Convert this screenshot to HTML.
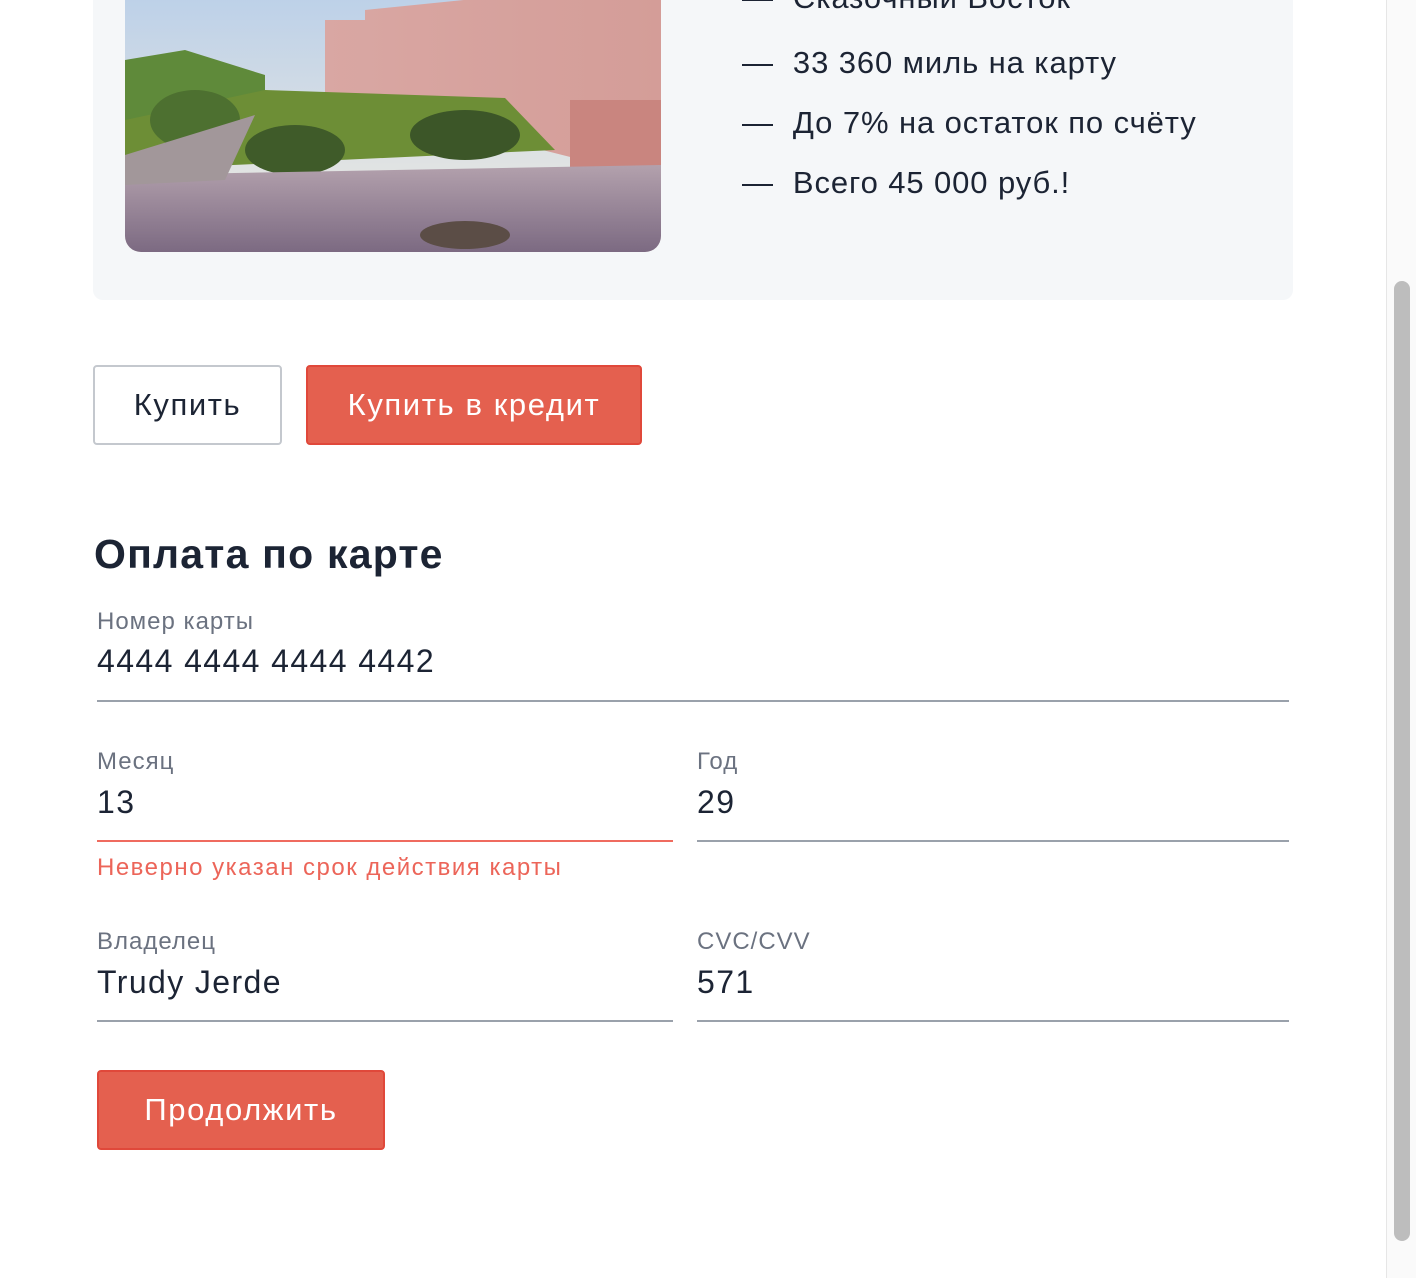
<!DOCTYPE html>
<html><head><meta charset="utf-8"><style>
*{margin:0;padding:0;box-sizing:border-box}
body{width:1416px;height:1278px;overflow:hidden;background:#fff;font-family:"Liberation Sans","Noto Sans CJK SC",sans-serif;color:#1c2434;position:relative}
.abs{position:absolute}
.card{left:93px;top:-40px;width:1200px;height:340px;background:#f5f7f9;border-radius:10px}
.img{left:125px;top:-20px;width:536px;height:272px;border-radius:0 0 16px 16px;overflow:hidden}
.li{left:742px;font-size:31px;white-space:nowrap;letter-spacing:0.9px}
.btn{height:80px;border-radius:4px;font-size:31px;letter-spacing:1.6px;display:flex;align-items:center;justify-content:center}
.lbl{font-size:24px;color:#6b7280;letter-spacing:1px}
.val{font-size:32px;color:#1c2434;letter-spacing:1.4px}
.line{height:2px;background:#9aa1ab}
.sb{left:1386px;top:0;width:30px;height:1278px;background:#fafafa;border-left:1px solid #e6e6e6}
.thumb{left:1394px;top:281px;width:16px;height:960px;background:#bdbdbd;border-radius:8px}
</style></head><body>
<div class="abs card"></div>
<div class="abs img">
<svg width="536" height="272" viewBox="0 0 536 272">
<defs><linearGradient id="sky" x1="0" y1="0" x2="0" y2="1"><stop offset="0" stop-color="#b9cfe9"/><stop offset="1" stop-color="#f2ece0"/></linearGradient>
<linearGradient id="wall" x1="0" y1="0" x2="1" y2="0"><stop offset="0" stop-color="#d9a7a3"/><stop offset="1" stop-color="#d49d98"/></linearGradient>
<linearGradient id="pave" x1="0" y1="0" x2="0" y2="1"><stop offset="0" stop-color="#b3a1ad"/><stop offset="1" stop-color="#7c6a82"/></linearGradient></defs>
<rect width="536" height="272" fill="url(#sky)"/>
<polygon points="200,40 240,40 240,30 536,0 536,200 200,115" fill="url(#wall)"/>
<rect x="445" y="120" width="91" height="80" fill="#c9857f"/>
<polygon points="0,80 60,70 140,95 140,150 0,160" fill="#5f8a3a"/>
<polygon points="0,140 140,110 380,118 430,170 0,190" fill="#6d8e36"/>
<ellipse cx="70" cy="140" rx="45" ry="30" fill="#4d7030"/>
<ellipse cx="170" cy="170" rx="50" ry="25" fill="#3f5b29"/>
<ellipse cx="340" cy="155" rx="55" ry="25" fill="#3c5628"/>
<rect x="120" y="196" width="260" height="12" fill="#c57f72"/>
<polygon points="0,195 536,185 536,272 0,272" fill="url(#pave)"/>
<polygon points="0,175 130,135 100,200 0,205" fill="#a2979a"/>
<ellipse cx="340" cy="255" rx="45" ry="14" fill="#5b4d46"/>
</svg></div>
<div class="abs li" style="top:-20px">—&nbsp;&nbsp;Сказочный Восток</div>
<div class="abs li" style="top:45px">—&nbsp;&nbsp;33 360 миль на карту</div>
<div class="abs li" style="top:105px">—&nbsp;&nbsp;До 7% на остаток по счёту</div>
<div class="abs li" style="top:165px">—&nbsp;&nbsp;Всего 45 000 руб.!</div>

<div class="abs btn" style="left:93px;top:365px;width:189px;border:2px solid #c4c8ce;color:#1c2434">Купить</div>
<div class="abs btn" style="left:306px;top:365px;width:336px;background:#e4604f;border:2px solid #e0483a;color:#fff">Купить в кредит</div>

<div class="abs" style="left:94px;top:531px;font-size:41px;font-weight:bold;letter-spacing:1.2px">Оплата по карте</div>

<div class="abs lbl" style="left:97px;top:608px">Номер карты</div>
<div class="abs val" style="left:97px;top:643px">4444 4444 4444 4442</div>
<div class="abs line" style="left:97px;top:700px;width:1192px"></div>

<div class="abs lbl" style="left:97px;top:748px">Месяц</div>
<div class="abs val" style="left:97px;top:784px">13</div>
<div class="abs line" style="left:97px;top:840px;width:576px;background:#ef6b5f"></div>
<div class="abs" style="left:97px;top:854px;font-size:24px;letter-spacing:1.5px;color:#ec6559">Неверно указан срок действия карты</div>

<div class="abs lbl" style="left:697px;top:748px">Год</div>
<div class="abs val" style="left:697px;top:784px">29</div>
<div class="abs line" style="left:697px;top:840px;width:592px"></div>

<div class="abs lbl" style="left:97px;top:928px">Владелец</div>
<div class="abs val" style="left:97px;top:964px">Trudy Jerde</div>
<div class="abs line" style="left:97px;top:1020px;width:576px"></div>

<div class="abs lbl" style="left:697px;top:928px">CVC/CVV</div>
<div class="abs val" style="left:697px;top:964px">571</div>
<div class="abs line" style="left:697px;top:1020px;width:592px"></div>

<div class="abs btn" style="left:97px;top:1070px;width:288px;background:#e4604f;border:2px solid #e0483a;color:#fff">Продолжить</div>

<div class="abs sb"></div>
<div class="abs thumb"></div>
</body></html>
